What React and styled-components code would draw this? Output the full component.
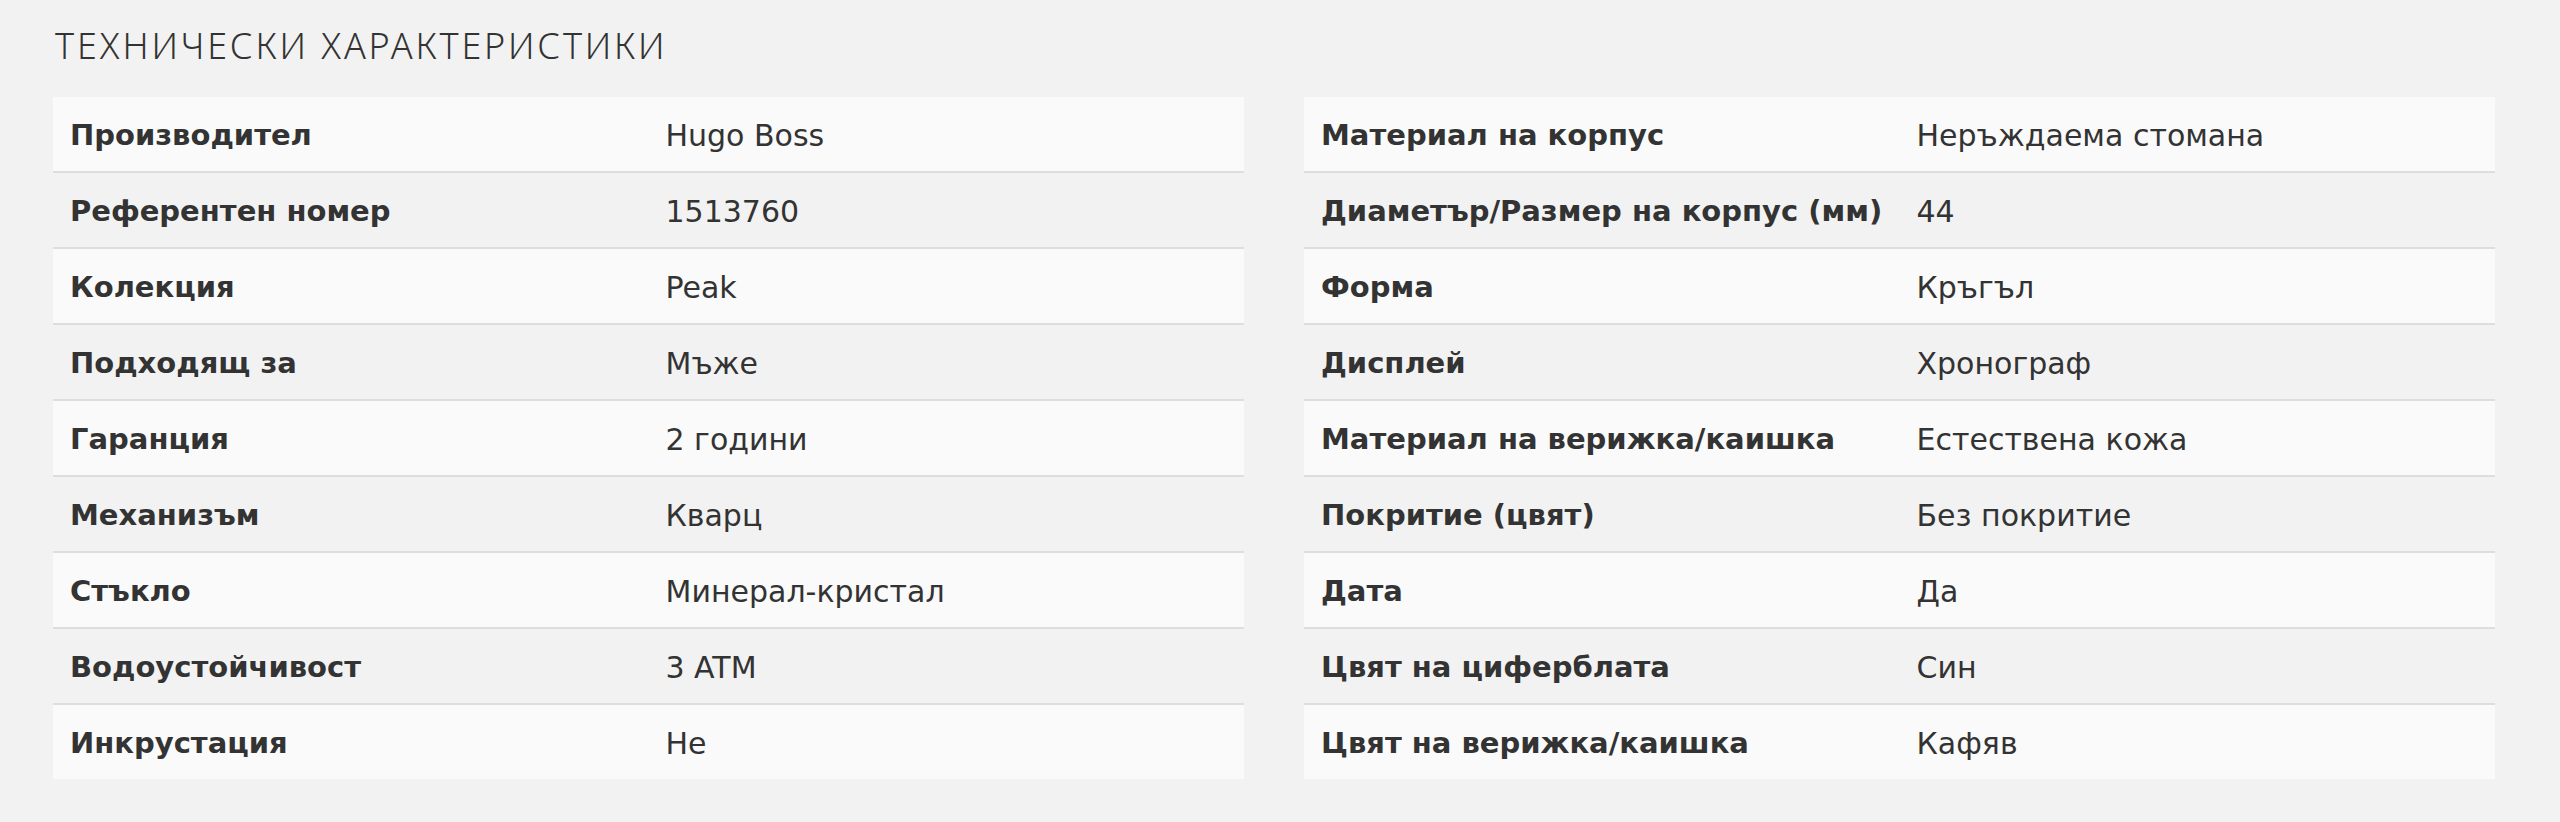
import styled, { createGlobalStyle } from "styled-components";

const GlobalStyle = createGlobalStyle`
  body {
    margin: 0;
    background: #f2f2f2;
    font-family: "DejaVu Sans", "Noto Sans", sans-serif;
    color: #333333;
  }
`;

const Section = styled.section`
  padding: 28px 65px 40px 53px;
`;

const Title = styled.h2`
  margin: 0 0 33px 2px;
  font-family: "Noto Sans", "Open Sans", sans-serif;
  font-size: 36px;
  line-height: 36px;
  font-weight: 300;
  letter-spacing: 2.8px;
  color: #333333;
  text-transform: uppercase;
`;

const Tables = styled.div`
  display: grid;
  grid-template-columns: 1fr 1fr;
  gap: 60px;
`;

const Table = styled.div`
  display: flex;
  flex-direction: column;
`;

const Row = styled.div`
  display: grid;
  grid-template-columns: 1fr 1fr;
  align-items: center;
  box-sizing: border-box;
  height: 76px;
  padding-top: 2px;
  background: ${(p) => (p.odd ? "#fafafa" : "#f2f2f2")};
  border-bottom: 2px solid #dedede;

  &:last-child {
    border-bottom: none;
    height: 74px;
  }
`;

const Label = styled.span`
  padding-left: 17px;
  font-size: 29px;
  font-weight: 700;
  color: #333333;
  white-space: nowrap;
`;

const Value = styled.span`
  padding-left: 17px;
  font-size: 30px;
  font-weight: 400;
  color: #333333;
`;

const left = [
  ["Производител", "Hugo Boss"],
  ["Референтен номер", "1513760"],
  ["Колекция", "Peak"],
  ["Подходящ за", "Мъже"],
  ["Гаранция", "2 години"],
  ["Механизъм", "Кварц"],
  ["Стъкло", "Минерал-кристал"],
  ["Водоустойчивост", "3 ATM"],
  ["Инкрустация", "Не"],
];

const right = [
  ["Материал на корпус", "Неръждаема стомана"],
  ["Диаметър/Размер на корпус (мм)", "44"],
  ["Форма", "Кръгъл"],
  ["Дисплей", "Хронограф"],
  ["Материал на верижка/каишка", "Естествена кожа"],
  ["Покритие (цвят)", "Без покритие"],
  ["Дата", "Да"],
  ["Цвят на циферблата", "Син"],
  ["Цвят на верижка/каишка", "Кафяв"],
];

function SpecTable({ rows }) {
  return (
    <Table>
      {rows.map(([label, value], i) => (
        <Row key={label} odd={i % 2 === 0}>
          <Label>{label}</Label>
          <Value>{value}</Value>
        </Row>
      ))}
    </Table>
  );
}

export default function App() {
  return (
    <>
      <GlobalStyle />
      <Section lang="bg">
        <Title>Технически характеристики</Title>
        <Tables>
          <SpecTable rows={left} />
          <SpecTable rows={right} />
        </Tables>
      </Section>
    </>
  );
}
